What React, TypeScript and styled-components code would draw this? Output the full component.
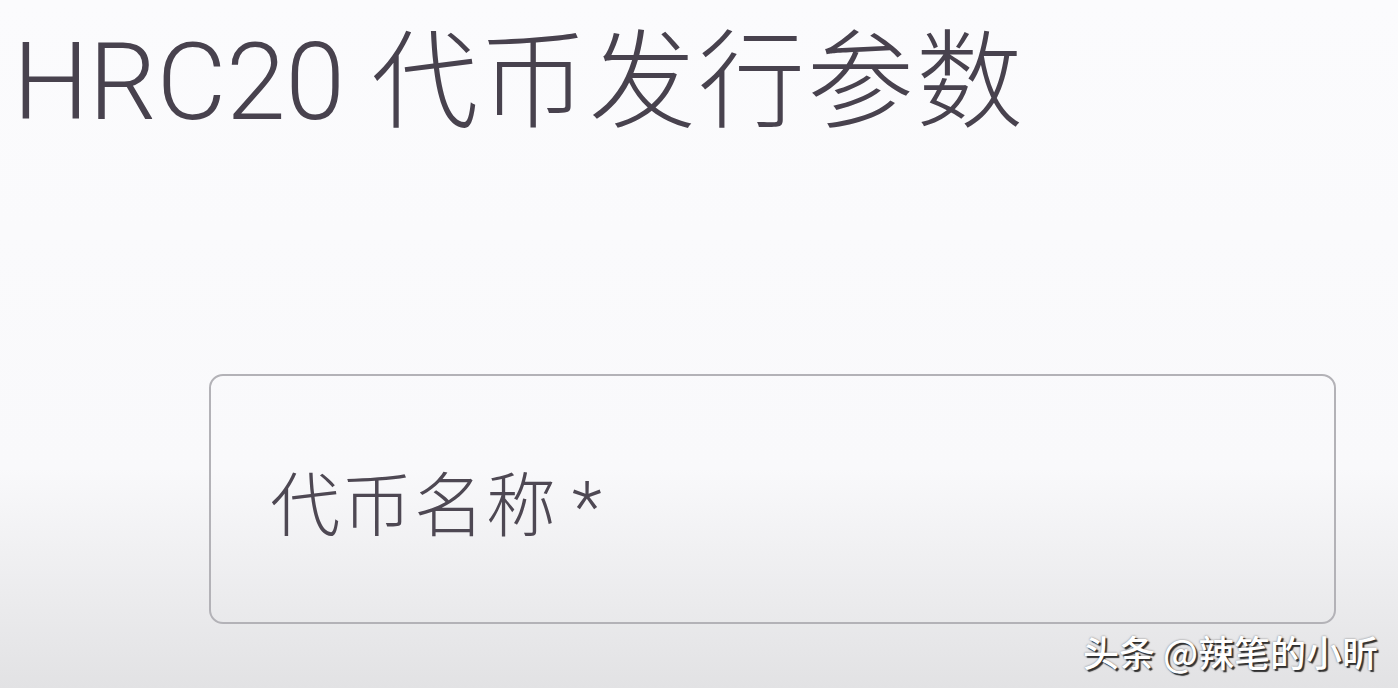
import React from "react";
import styled, { createGlobalStyle } from "styled-components";

const GlobalStyle = createGlobalStyle`
  html, body {
    margin: 0;
    padding: 0;
  }
  body {
    font-family: Roboto, "Noto Sans CJK SC", sans-serif;
  }
`;

const Screen = styled.div`
  position: relative;
  width: 1398px;
  height: 688px;
  overflow: hidden;
  box-sizing: border-box;
  padding: 29px 0 0 13px;
  display: flex;
  flex-direction: column;
  background: linear-gradient(
    180deg,
    #fbfbfd 0%,
    #f9f9fb 68%,
    #ececee 86%,
    #e2e2e4 100%
  );
`;

const Title = styled.h1`
  margin: 0;
  font-family: Roboto, "Noto Sans CJK SC", sans-serif;
  font-weight: 300;
  font-size: 107px;
  line-height: 1;
  color: #48424e;
  white-space: nowrap;
`;

const TitleCjk = styled.span`
  letter-spacing: 2px;
`;

const Field = styled.div`
  margin: 238px 0 0 196px;
  width: 1127px;
  height: 250px;
  box-sizing: border-box;
  border: 2px solid #b3b2b7;
  border-radius: 14px;
  display: flex;
  align-items: center;
  padding-left: 59px;
  padding-top: 10px;
`;

const Label = styled.span`
  font-family: "Noto Sans CJK SC", sans-serif;
  font-weight: 300;
  font-size: 70px;
  line-height: 1;
  color: #4e4853;
  letter-spacing: 2px;
`;

const Required = styled.span`
  font-family: Roboto, sans-serif;
  font-weight: 300;
  margin-left: 14px;
`;

const Watermark = styled.div`
  position: absolute;
  right: 20px;
  bottom: 19px;
  font-family: "Noto Sans CJK SC", sans-serif;
  font-weight: 500;
  font-size: 36px;
  line-height: 1;
  color: #ffffff;
  text-shadow: 2px 2px 1px rgba(20, 20, 20, 0.85), 0 0 2px rgba(0, 0, 0, 0.5);
`;

export default function App() {
  return (
    <>
      <GlobalStyle />
      <Screen>
        <Title>
          HRC20 <TitleCjk>代币发行参数</TitleCjk>
        </Title>
        <Field>
          <Label>
            代币名称<Required>*</Required>
          </Label>
        </Field>
        <Watermark>头条 @辣笔的小昕</Watermark>
      </Screen>
    </>
  );
}
